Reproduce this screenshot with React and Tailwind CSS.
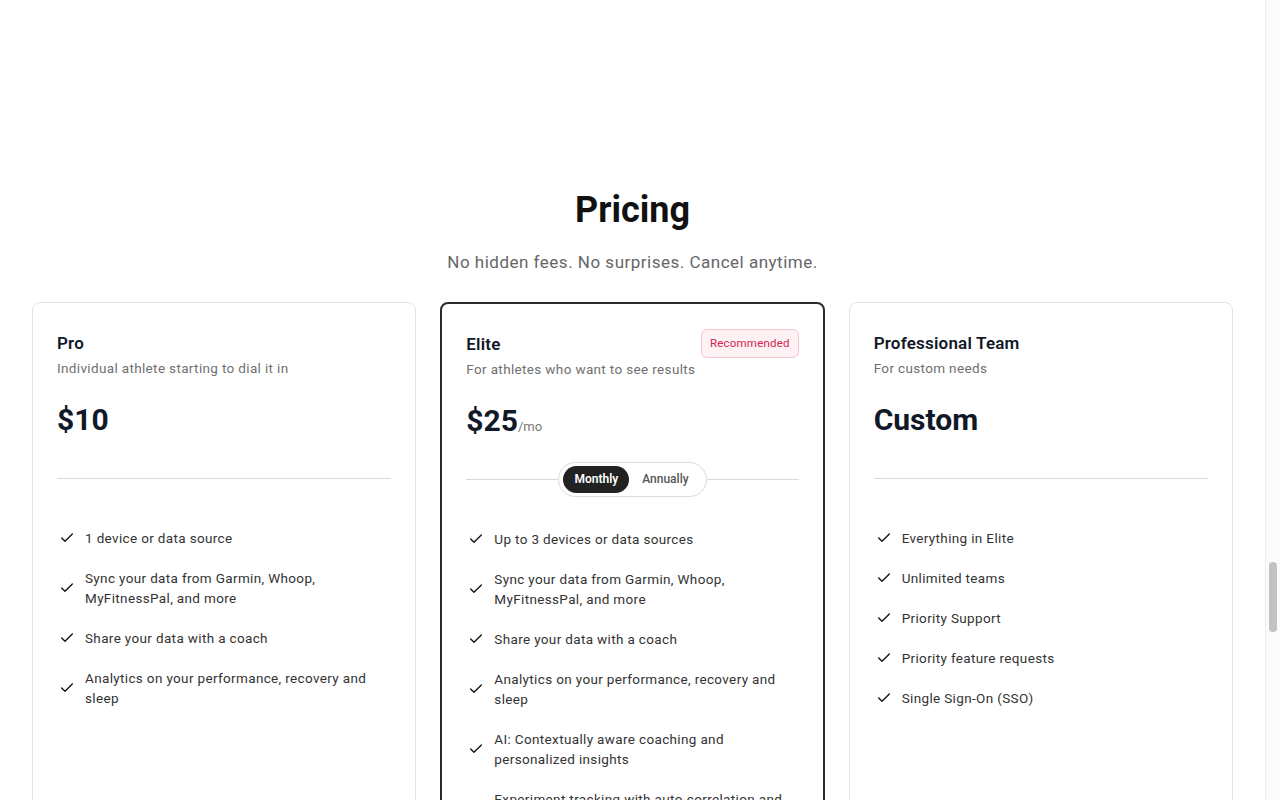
import React from "react";
import { Check } from "lucide-react";

function Feature({ children }) {
  return (
    <li className="flex items-center gap-2">
      <span className="flex w-5 shrink-0 justify-center">
        <Check className="h-4 w-4 text-[#111]" strokeWidth={2} />
      </span>
      <span className="text-[13.5px] leading-5 tracking-[0.35px] text-[#333]">{children}</span>
    </li>
  );
}

function Divider({ children }) {
  return (
    <div className="mt-[22px] flex h-9 items-center">
      <div className="h-px flex-1 bg-[#d9d9d9]" />
      {children}
      {children ? <div className="h-px flex-1 bg-[#d9d9d9]" /> : null}
    </div>
  );
}

function Features({ items }) {
  return (
    <ul className="mt-8 flex flex-col gap-5">
      {items.map((t) => (
        <Feature key={t}>{t}</Feature>
      ))}
    </ul>
  );
}

function CardButton({ dark, children }) {
  return (
    <button
      className={
        dark
          ? "mt-10 h-11 w-full rounded-md bg-[#1f1f1f] text-sm font-semibold text-white"
          : "mt-10 h-11 w-full rounded-md border border-[#d9d9d9] bg-white text-sm font-semibold text-[#111]"
      }
    >
      {children}
    </button>
  );
}

export default function App() {
  return (
    <div className="flex h-screen overflow-hidden bg-white font-['Roboto',sans-serif] text-[#111827]">
      <main className="min-w-0 flex-1 overflow-y-auto">
        <section className="px-8 pb-24 pt-[190px]">
          <h1 className="text-center text-4xl font-bold leading-10 text-[#111]">Pricing</h1>
          <p className="mt-[18px] text-center text-[17px] leading-7 tracking-[0.5px] text-[#666]">
            No hidden fees. No surprises. Cancel anytime.
          </p>

          <div className="mt-[26px] grid grid-cols-3 gap-6">
            {/* Pro */}
            <div className="flex flex-col rounded-lg border border-[#e2e2e2] bg-white px-6 pb-8 pt-7">
              <h3 className="text-[17px] font-semibold leading-6 tracking-[0.2px] text-[#111827]">Pro</h3>
              <p className="mt-[3px] text-[13.5px] leading-5 tracking-[0.35px] text-[#707070]">
                Individual athlete starting to dial it in
              </p>
              <div className="mt-6 text-3xl font-bold leading-9 text-[#111827]">$10</div>
              <Divider />
              <Features
                items={[
                  "1 device or data source",
                  "Sync your data from Garmin, Whoop, MyFitnessPal, and more",
                  "Share your data with a coach",
                  "Analytics on your performance, recovery and sleep",
                ]}
              />
              <div className="flex-1" />
              <CardButton>Get started</CardButton>
            </div>

            {/* Elite */}
            <div className="flex flex-col rounded-lg border-2 border-[#2b2b2b] bg-white px-6 pb-8 pt-[25px]">
              <div className="flex h-[29px] items-center justify-between">
                <h3 className="text-[17px] font-semibold leading-6 tracking-[0.2px] text-[#111827]">Elite</h3>
                <span className="flex h-[29px] items-center rounded-md border border-[#f6c4cf] bg-[#fdf1f4] px-[8px] text-[11.5px] tracking-[0.2px] text-[#d42350]">
                  Recommended
                </span>
              </div>
              <p className="mt-px text-[13.5px] leading-5 tracking-[0.35px] text-[#707070]">
                For athletes who want to see results
              </p>
              <div className="mt-6 flex h-9 items-baseline">
                <span className="text-3xl font-bold leading-9 text-[#111827]">$25</span>
                <span className="text-[13px] leading-none text-[#777]">/mo</span>
              </div>
              <Divider>
                <div className="flex h-[35px] items-center rounded-full border border-[#dcdcdc] bg-white px-[4px]">
                  <span className="flex h-[27px] items-center rounded-full bg-[#222] px-[11px] text-[12px] font-semibold text-white">
                    Monthly
                  </span>
                  <span className="flex h-[27px] items-center px-[13px] text-[12px] font-medium text-[#555]">
                    Annually
                  </span>
                </div>
              </Divider>
              <Features
                items={[
                  "Up to 3 devices or data sources",
                  "Sync your data from Garmin, Whoop, MyFitnessPal, and more",
                  "Share your data with a coach",
                  "Analytics on your performance, recovery and sleep",
                  "AI: Contextually aware coaching and personalized insights",
                  "Experiment tracking with auto-correlation and insights",
                ]}
              />
              <div className="flex-1" />
              <CardButton dark>Get started</CardButton>
            </div>

            {/* Professional Team */}
            <div className="flex flex-col rounded-lg border border-[#e2e2e2] bg-white px-6 pb-8 pt-7">
              <h3 className="text-[17px] font-semibold leading-6 tracking-[0.2px] text-[#111827]">Professional Team</h3>
              <p className="mt-[3px] text-[13.5px] leading-5 tracking-[0.35px] text-[#707070]">
                For custom needs
              </p>
              <div className="mt-6 text-3xl font-bold leading-9 text-[#111827]">Custom</div>
              <Divider />
              <Features
                items={[
                  "Everything in Elite",
                  "Unlimited teams",
                  "Priority Support",
                  "Priority feature requests",
                  "Single Sign-On (SSO)",
                ]}
              />
              <div className="flex-1" />
              <CardButton>Contact us</CardButton>
            </div>
          </div>
        </section>
      </main>

      {/* scrollbar track */}
      <aside className="flex w-[15px] shrink-0 flex-col items-center border-l border-[#ececec] bg-[#fbfbfb] pt-[562px]">
        <div className="h-[70px] w-[8px] rounded-full bg-[#c2c2c2]" />
      </aside>
    </div>
  );
}
